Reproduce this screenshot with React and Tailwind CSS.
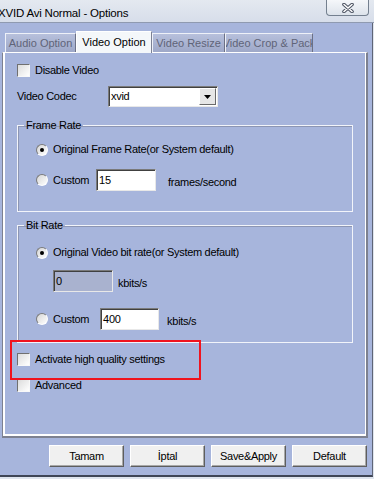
const font = "font-['Liberation_Sans',Arial,sans-serif]";

function Checkbox() {
  return (
    <span className="w-[13px] h-[13px] shrink-0 border border-t-[#707070] border-l-[#707070] border-r-[#f8f8f8] border-b-[#f8f8f8] bg-linear-to-br from-[#dcdcdc] to-white" />
  );
}

function Radio({ checked }) {
  return (
    <span className="w-[12px] h-[12px] shrink-0 rounded-full flex items-center justify-center border border-t-[#7c7c7c] border-l-[#7c7c7c] border-r-white border-b-white bg-linear-to-br from-[#d6d6d6] to-white">
      {checked && <span className="w-[4px] h-[4px] rounded-full bg-black" />}
    </span>
  );
}

function Field({ value, width, disabled }) {
  return (
    <div
      className={`h-[22px] shrink-0 flex items-center pl-[2px] border border-t-[#7a7a7a] border-l-[#7a7a7a] border-r-[#e8e8e8] border-b-[#e8e8e8] shadow-[inset_1px_1px_0_#404040] ${
        disabled ? "bg-[#a9b2cf]" : "bg-white"
      }`}
      style={{ width }}
    >
      {value}
    </div>
  );
}

function Tab({ label, width, active }) {
  return active ? (
    <div
      className="relative z-10 h-[22px] -mb-px flex items-center justify-center bg-[#f4f7fa] border-t border-l border-white border-r border-r-[#7c8194] text-black tracking-normal whitespace-nowrap overflow-hidden"
      style={{ width }}
    >
      {label}
    </div>
  ) : (
    <div
      className="h-[19px] flex items-center justify-center bg-linear-to-b from-[#b7c0dc] to-[#9ea8c8] border-t border-l border-[#eef1f8] border-r border-r-[#6c7186] text-[#5f6478] tracking-normal whitespace-nowrap overflow-hidden"
      style={{ width }}
    >
      {label}
    </div>
  );
}

function Button({ children }) {
  return (
    <button className="w-[75px] h-[22px] flex items-center justify-center bg-[#f0f0f0] border border-t-white border-l-white border-r-[#5e5e5e] border-b-[#5e5e5e] shadow-[inset_-1px_-1px_0_#a8a8a8] text-black">
      {children}
    </button>
  );
}

export default function App() {
  return (
    <div className={`w-[374px] h-[479px] overflow-hidden bg-[#dfe5ee] text-[11px] leading-[13px] tracking-[-0.3px] text-black ${font}`}>
      {/* title bar */}
      <div className="h-[23px] flex items-start justify-between bg-linear-to-b from-[#e4e9f0] to-[#d7deea] border-b border-[#8f9ab0]">
        <span className="-ml-[2px] mt-[6px] text-[11.5px] leading-[14px] tracking-[-0.2px]">XVID Avi Normal - Options</span>
        <div className="w-[43px] h-[16px] mr-[5px] rounded-b-[4px] border border-t-0 border-[#74808f] bg-linear-to-b from-[#f5f7fa] to-[#dde3eb] flex items-center justify-center">
          <svg width="14" height="10" viewBox="0 0 14 10">
            <path d="M3 1.5 L11 8.5 M11 1.5 L3 8.5" stroke="#4a5160" strokeWidth="3.6" strokeLinecap="round" fill="none" />
            <path d="M3 1.5 L11 8.5 M11 1.5 L3 8.5" stroke="#ffffff" strokeWidth="1.6" strokeLinecap="round" fill="none" />
          </svg>
        </div>
      </div>

      {/* window body */}
      <div className="w-[373px] h-[454px] bg-[#a7b5dc] border-r border-r-[#5f6576] border-b-2 border-b-[#3f4656] flex flex-col">
        {/* tabs */}
        <div className="h-[21px] mt-[8px] pl-[5px] flex items-end">
          <Tab label="Audio Option" width={71} />
          <Tab label="Video Option" width={76} active />
          <Tab label="Video Resize" width={73} />
          <Tab label="Video Crop & Pack" width={88} />
        </div>

        {/* tab panel */}
        <div className="relative ml-[2px] w-[366px] h-[386px] border-t border-t-white border-l border-l-[#7d8190] border-r-2 border-r-[#7d8190] border-b-2 border-b-[#7d8190] shadow-[inset_2px_0_0_#fff,inset_-1px_0_0_#fff,inset_0_-2px_0_#fff] flex flex-col">
          <div className="mt-[11px] ml-[14px] flex items-center gap-[5px]">
            <Checkbox />
            <span>Disable Video</span>
          </div>

          <div className="mt-[9px] ml-[14px] flex items-center">
            <span className="w-[91px]">Video Codec</span>
            <div className="w-[110px] h-[21px] flex items-center justify-between bg-white border border-t-[#7a7a7a] border-l-[#7a7a7a] border-r-[#e8e8e8] border-b-[#e8e8e8] shadow-[inset_1px_1px_0_#404040]">
              <span className="pl-[2px]">xvid</span>
              <div className="w-[17px] h-[17px] mr-px flex items-center justify-center bg-[#e6e6e6] border border-t-white border-l-white border-r-[#6a6a6a] border-b-[#6a6a6a]">
                <svg width="7" height="4" viewBox="0 0 7 4">
                  <path d="M0 0 H7 L3.5 4 Z" fill="#000" />
                </svg>
              </div>
            </div>
          </div>

          <fieldset className="mt-[12px] ml-[14px] w-[336px] h-[93px] border border-[#f2f4fa] shadow-[inset_1px_1px_0_#8d96b3]">
            <legend className="ml-[6px] px-[2px]">Frame Rate</legend>
            <div className="mt-[11px] ml-[18px] flex items-center gap-[5px]">
              <Radio checked />
              <span>Original Frame Rate(or System default)</span>
            </div>
            <div className="mt-[13px] ml-[18px] flex items-center">
              <Radio />
              <span className="ml-[5px] mr-[7px]">Custom</span>
              <Field value="15" width={60} />
              <span className="ml-[12px] mt-[4px]">frames/second</span>
            </div>
          </fieldset>

          <fieldset className="mt-[7px] ml-[14px] w-[336px] h-[124px] border border-[#f2f4fa] shadow-[inset_1px_1px_0_#8d96b3]">
            <legend className="ml-[6px] px-[2px]">Bit Rate</legend>
            <div className="mt-[14px] ml-[18px] flex items-center gap-[5px]">
              <Radio checked />
              <span>Original Video bit rate(or System default)</span>
            </div>
            <div className="mt-[11px] ml-[35px] flex items-center">
              <Field value="0" width={60} disabled />
              <span className="ml-[5px] mt-[4px]">kbits/s</span>
            </div>
            <div className="mt-[16px] ml-[18px] flex items-center">
              <Radio />
              <span className="ml-[5px] mr-[11px]">Custom</span>
              <Field value="400" width={59} />
              <span className="ml-[8px] mt-[4px]">kbits/s</span>
            </div>
          </fieldset>

          <div className="mt-[10px] ml-[14px] flex items-center gap-[5px]">
            <Checkbox />
            <span>Activate high quality settings</span>
          </div>
          <div className="mt-[13px] ml-[14px] flex items-center gap-[5px]">
            <Checkbox />
            <span>Advanced</span>
          </div>

          {/* annotation */}
          <div className="absolute left-[7px] top-[287px] w-[191px] h-[40px] border-2 border-[#f0141e]" />
        </div>

        {/* buttons */}
        <div className="mt-[7px] pr-[5px] flex justify-end gap-[6px]">
          <Button>Tamam</Button>
          <Button>İptal</Button>
          <Button>Save&amp;Apply</Button>
          <Button>Default</Button>
        </div>
      </div>
    </div>
  );
}
